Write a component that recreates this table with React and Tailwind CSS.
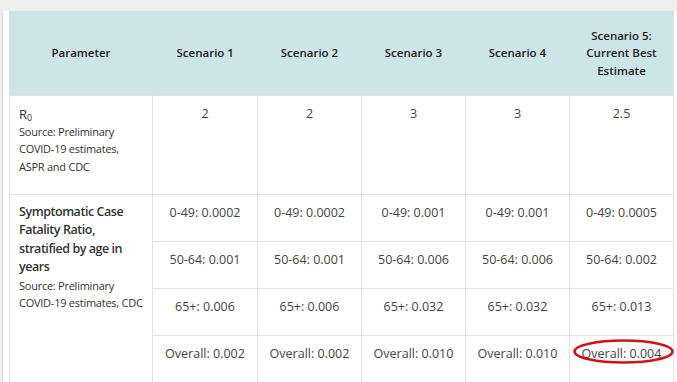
import React from 'react';

const scenarios = ['Scenario 1', 'Scenario 2', 'Scenario 3', 'Scenario 4'];
const r0 = ['2', '2', '3', '3', '2.5'];
const cfr = [
  ['0-49: 0.0002', '0-49: 0.0002', '0-49: 0.001', '0-49: 0.001', '0-49: 0.0005'],
  ['50-64: 0.001', '50-64: 0.001', '50-64: 0.006', '50-64: 0.006', '50-64: 0.002'],
  ['65+: 0.006', '65+: 0.006', '65+: 0.032', '65+: 0.032', '65+: 0.013'],
  ['Overall: 0.002', 'Overall: 0.002', 'Overall: 0.010', 'Overall: 0.010', 'Overall: 0.004'],
];

export default function App() {
  const cell = 'border border-[#e2e2e2] text-center align-top text-[12.5px] text-[#444] px-1';
  const head = 'text-[11.5px] font-semibold text-[#222]';
  return (
    <div className="w-[677px] h-[382px] overflow-hidden bg-[#efefef] pt-[11px] pl-[2px]" style={{ fontFamily: '"Open Sans", sans-serif' }}>
      <div className="h-full bg-white border-l border-[#dcdcdc] pl-[6px] pr-[3px]">
        <table className="border-collapse table-fixed w-[664px]">
          <colgroup>
            <col className="w-[143px]" />
            <col className="w-[105px]" />
            <col className="w-[104px]" />
            <col className="w-[104px]" />
            <col className="w-[104px]" />
            <col className="w-[104px]" />
          </colgroup>
          <thead>
            <tr className="h-[84px] bg-[#cde5e9]">
              <th className={head + ' border-x border-[#cde5e9]'}>Parameter</th>
              {scenarios.map(s => (
                <th key={s} className={head}>{s}</th>
              ))}
              <th className={head + ' leading-[17.5px] px-1'}>
                Scenario 5:<br />Current Best<br />Estimate
              </th>
            </tr>
          </thead>
          <tbody>
            <tr className="h-[99px]">
              <td className="border border-[#e2e2e2] align-top text-left px-[9px] pt-[9px] text-[#333]">
                <div className="text-[13px] leading-[18px]">R<sub className="text-[9px]">0</sub></div>
                <div className="text-[11px] leading-[17.5px] tracking-[-0.25px] whitespace-nowrap">Source: Preliminary<br />COVID-19 estimates,<br />ASPR and CDC</div>
              </td>
              {r0.map((v, i) => (
                <td key={i} className={cell + ' pt-[9px] leading-[18px]'}>{v}</td>
              ))}
            </tr>
            {cfr.map((row, ri) => (
              <tr key={ri} className="h-[47px]">
                {ri === 0 && (
                  <td rowSpan={4} className="border border-[#e2e2e2] align-top text-left px-[9px] pt-[8px] text-[#333]">
                    <div className="text-[12.5px] leading-[18.5px] font-semibold tracking-[-0.45px] whitespace-nowrap">
                      Symptomatic Case<br />Fatality Ratio,<br />stratified by age in<br />years
                    </div>
                    <div className="text-[11px] leading-[17.5px] tracking-[-0.25px] whitespace-nowrap">Source: Preliminary<br />COVID-19 estimates, CDC</div>
                  </td>
                )}
                {row.map((v, i) => (
                  <td key={i} className={cell + ' pt-[9px] leading-[18px] relative'}>
                    {v}
                    {ri === 3 && i === 4 && (
                      <svg className="absolute left-[3px] top-[3px]" width="101" height="25" viewBox="0 0 101 25">
                        <ellipse cx="50.5" cy="12.5" rx="49" ry="11" fill="none" stroke="#d4101c" strokeWidth="2.6" />
                      </svg>
                    )}
                  </td>
                ))}
              </tr>
            ))}
          </tbody>
        </table>
      </div>
    </div>
  );
}
